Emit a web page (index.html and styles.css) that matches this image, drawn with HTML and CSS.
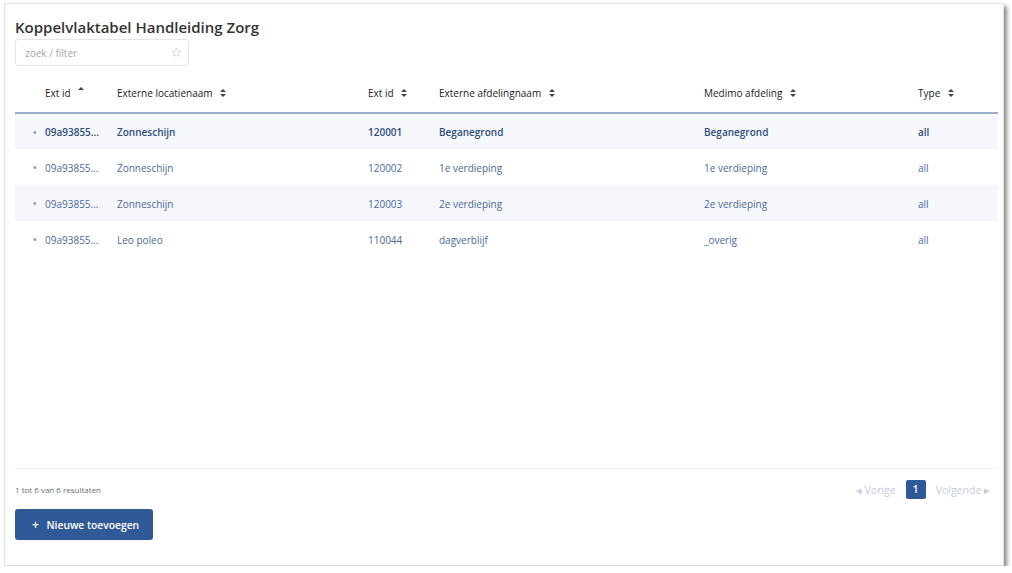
FILE: index.html
```html
<!DOCTYPE html>
<html lang="nl">
<head>
    <meta charset="UTF-8">
    <meta name="viewport" content="width=device-width, initial-scale=1.0">
    <title>Koppelvlaktabel Handleiding Zorg</title>
    <link rel="stylesheet" href="styles.css">
</head>
<body>
    <div class="card">
        <h1 class="title">Koppelvlaktabel Handleiding Zorg</h1>

        <div class="search">
            <input type="text" placeholder="zoek / filter">
            <svg class="star" width="11" height="11" viewBox="0 0 24 24">
                <path d="M12 2.5l2.9 6.2 6.6.7-4.9 4.5 1.4 6.6L12 17.2l-5.9 3.3 1.4-6.6-4.9-4.5 6.6-.7z" fill="none" stroke="#c9ced6" stroke-width="1.6" stroke-linejoin="round"/>
            </svg>
        </div>

        <div class="table-wrap">
            <table class="grid">
                <colgroup>
                    <col style="width:22px">
                    <col style="width:72px">
                    <col style="width:251px">
                    <col style="width:71px">
                    <col style="width:265px">
                    <col style="width:214px">
                    <col style="width:88px">
                </colgroup>
                <thead>
                    <tr>
                        <th></th>
                        <th>Ext id <span class="sort asc"></span></th>
                        <th>Externe locatienaam <span class="sort"></span></th>
                        <th>Ext id <span class="sort"></span></th>
                        <th>Externe afdelingnaam <span class="sort"></span></th>
                        <th>Medimo afdeling <span class="sort"></span></th>
                        <th>Type <span class="sort"></span></th>
                    </tr>
                </thead>
                <tbody>
                    <tr class="active">
                        <td class="dot">•</td>
                        <td>09a93855...</td>
                        <td>Zonneschijn</td>
                        <td>120001</td>
                        <td>Beganegrond</td>
                        <td>Beganegrond</td>
                        <td>all</td>
                    </tr>
                    <tr>
                        <td class="dot">•</td>
                        <td>09a93855...</td>
                        <td>Zonneschijn</td>
                        <td>120002</td>
                        <td>1e verdieping</td>
                        <td>1e verdieping</td>
                        <td>all</td>
                    </tr>
                    <tr class="striped">
                        <td class="dot">•</td>
                        <td>09a93855...</td>
                        <td>Zonneschijn</td>
                        <td>120003</td>
                        <td>2e verdieping</td>
                        <td>2e verdieping</td>
                        <td>all</td>
                    </tr>
                    <tr>
                        <td class="dot">•</td>
                        <td>09a93855...</td>
                        <td>Leo poleo</td>
                        <td>110044</td>
                        <td>dagverblijf</td>
                        <td>_overig</td>
                        <td>all</td>
                    </tr>
                </tbody>
            </table>
        </div>

        <div class="footer">
            <span class="results">1 tot 6 van 6 resultaten</span>
            <div class="pager">
                <span class="pager-link">&#9666; Vorige</span>
                <span class="page current">1</span>
                <span class="pager-link">Volgende &#9656;</span>
            </div>
        </div>

        <div class="actions">
            <button class="btn-add"><span class="plus">+</span> Nieuwe toevoegen</button>
        </div>
    </div>
</body>
</html>
```

FILE: styles.css
```css
* {
    box-sizing: border-box;
}

body {
    margin: 0;
    padding: 3px 0 0 4px;
    background-color: #ffffff;
    font-family: 'Open Sans', 'Noto Sans', Arial, sans-serif;
    color: #333;
}

.card {
    display: flex;
    flex-direction: column;
    width: 1000px;
    height: 563px;
    padding: 13px 6px 25px 10px;
    background-color: #fff;
    border: 1px solid #e2e2e2;
    box-shadow: 3px 3px 4px rgba(0, 0, 0, 0.45);
}

.title {
    margin: 0;
    font-size: 15px;
    line-height: 20px;
    font-weight: 600;
    color: #333;
}

.search {
    position: relative;
    width: 174px;
    height: 27px;
    margin-top: 2px;
}

.search input {
    width: 100%;
    height: 100%;
    padding: 0 20px 0 9px;
    border: 1px solid #e3e5e9;
    border-radius: 3px;
    font-family: inherit;
    font-size: 10px;
    color: #333;
    outline: none;
}

.search input::placeholder {
    color: #a3a8b0;
}

.star {
    position: absolute;
    right: 7px;
    top: 8px;
}

.table-wrap {
    flex: 1;
    margin-top: 11px;
}

.grid {
    width: 983px;
    table-layout: fixed;
    border-collapse: collapse;
    font-size: 10px;
}

.grid th {
    height: 36px;
    padding: 0 8px 3px;
    text-align: left;
    font-weight: 400;
    color: #222;
    border-bottom: 2px solid #9aaec6;
    white-space: nowrap;
}

.grid td {
    height: 36px;
    padding: 1px 8px 0;
    color: #4a6a9a;
    white-space: nowrap;
}

.grid td.dot {
    padding: 1px 0 0 0;
    text-align: right;
    color: #8b98ab;
    font-size: 12px;
}

.grid tr.active td,
.grid tr.striped td {
    background-color: #f5f7fa;
}

.grid tr.active td {
    font-weight: 600;
    color: #2f4d7b;
}

.grid tr.active td.dot {
    font-weight: normal;
    color: #8b98ab;
}

.sort {
    display: inline-block;
    position: relative;
    width: 6px;
    height: 9px;
    margin-left: 5px;
    vertical-align: -1px;
}

.sort::before,
.sort::after {
    content: '';
    position: absolute;
    left: 0;
    border-left: 3px solid transparent;
    border-right: 3px solid transparent;
}

.sort::before {
    top: 0;
    border-bottom: 3px solid #444;
}

.sort::after {
    top: 5px;
    border-top: 3px solid #444;
}

.sort.asc::before {
    top: -2px;
}

.sort.asc::after {
    display: none;
}

.footer {
    display: flex;
    justify-content: space-between;
    align-items: center;
    width: 983px;
    padding-top: 11px;
    border-top: 1px solid #eef0f3;
}

.results {
    font-size: 8px;
    color: #6b6f75;
}

.pager {
    display: flex;
    align-items: center;
    gap: 10px;
    padding-right: 8px;
    font-size: 10.5px;
}

.pager-link {
    color: #c5ccd7;
}

.page {
    display: inline-block;
    width: 20px;
    height: 19px;
    line-height: 19px;
    text-align: center;
    border-radius: 2px;
}

.page.current {
    background-color: #2f5a97;
    color: #fff;
    font-weight: 600;
    font-size: 10px;
}

.actions {
    margin-top: 10px;
}

.btn-add {
    height: 31px;
    padding: 0 14px 0 17px;
    background-color: #2f5a97;
    color: #fff;
    border: none;
    border-radius: 3px;
    font-family: inherit;
    font-size: 10.3px;
    font-weight: 600;
    cursor: pointer;
}

.btn-add .plus {
    margin-right: 5px;
    font-size: 12px;
}
```
